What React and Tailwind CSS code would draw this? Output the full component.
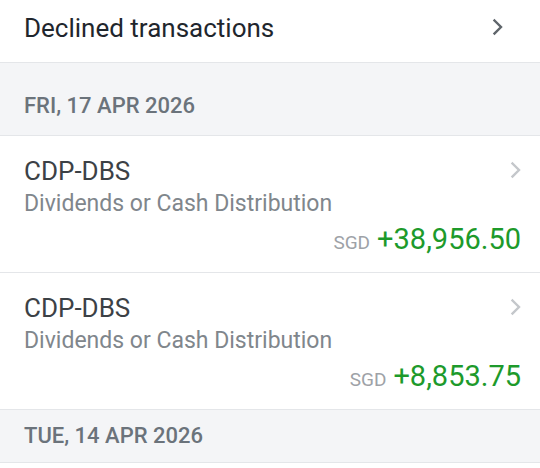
const Chevron = ({ className }) => (
  <svg className={className} viewBox="0 0 14 18" fill="none" stroke="currentColor" strokeWidth={2.4} strokeLinecap="square">
    <path d="M3.5 2.5l6.5 6.5-6.5 6.5" />
  </svg>
)

const Transaction = ({ amount }) => (
  <div className="h-[137px] border-b border-[#e4e6e9] bg-white pl-6 pr-[19px] pt-[20px] flex flex-col">
    <div className="flex items-center justify-between">
      <span className="text-[26px] leading-[30px] text-[#3c4146]">CDP-DBS</span>
      <Chevron className="w-[14px] h-[18px] -mr-[2px] -mt-[3px] text-[#c4c7cb]" />
    </div>
    <div className="text-[23px] leading-[28px] mt-[4px] text-[#80868c]">Dividends or Cash Distribution</div>
    <div className="flex items-baseline justify-end gap-[7px] mt-[4px]">
      <span className="text-[19px] text-[#9ea2a7]">SGD</span>
      <span className="text-[29px] leading-[34px] text-[#1d9a2b]">{amount}</span>
    </div>
  </div>
)

const DateHeader = ({ label, className }) => (
  <div className={`bg-[#f4f5f7] border-b border-[#e4e6e9] px-6 flex items-end ${className}`}>
    <span className="text-[22px] leading-[28px] font-medium text-[#6b737b]">{label}</span>
  </div>
)

export default function App() {
  return (
    <div className="w-[540px] h-[468px] bg-white overflow-hidden" style={{ fontFamily: "Roboto, 'Noto Sans', sans-serif" }}>
      <div className="h-[63px] border-b border-[#e4e6e9] flex items-center justify-between pl-6 pr-[35px]">
        <span className="text-[26px] leading-[32px] text-[#1f262d] pb-[7px]">Declined transactions</span>
        <Chevron className="w-[14px] h-[18px] text-[#5f656b] mb-[9px]" />
      </div>
      <DateHeader label="FRI, 17 APR 2026" className="h-[73px] pb-[15px]" />
      <Transaction amount="+38,956.50" />
      <Transaction amount="+8,853.75" />
      <DateHeader label="TUE, 14 APR 2026" className="h-[53px] pb-[12px]" />
    </div>
  )
}
